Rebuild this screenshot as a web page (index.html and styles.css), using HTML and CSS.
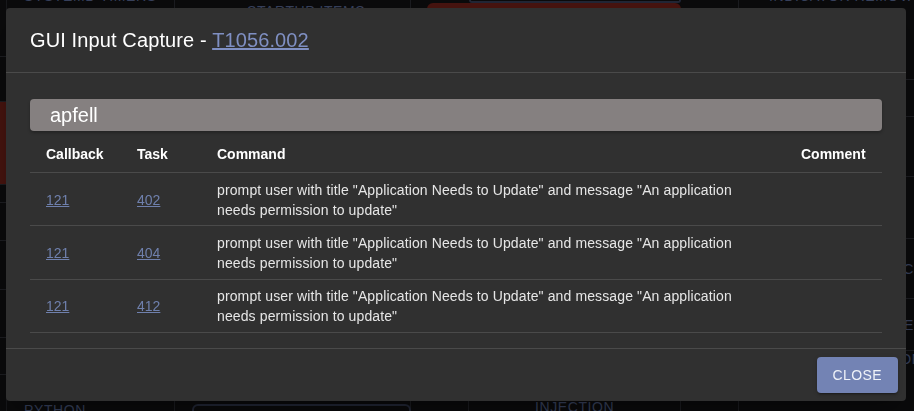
FILE: index.html
```html
<!DOCTYPE html>
<html lang="en">
<head>
<meta charset="utf-8">
<title>GUI Input Capture</title>
<link rel="stylesheet" href="styles.css">
</head>
<body>
<div class="matrix">
  <div class="col c0">
    <div class="cell h57"></div>
    <div class="cell h45"></div>
    <div class="cell red h83"></div>
    <div class="cell h18"></div>
    <div class="cell h38"></div>
    <div class="cell h49"></div>
    <div class="cell h48"></div>
    <div class="cell h37"></div>
  </div>
  <div class="col c1">
    <div class="tech tech-up pad17">SYSTEMD TIMERS</div>
    <div class="fill"></div>
    <div class="tech pad17 tech-low">PYTHON</div>
  </div>
  <div class="col c2">
    <div class="tech tech-mid pad72">STARTUP ITEMS</div>
    <div class="fill"></div>
    <div class="outline-box"></div>
  </div>
  <div class="col c3">
    <div class="split-top">
      <div class="gap58"></div>
      <div class="outline-box-end"></div>
    </div>
    <div class="red-cell"></div>
    <div class="fill"></div>
    <div class="split-bottom">
      <div class="sub-a"></div>
      <div class="sub-b"><span class="tech">INJECTION</span></div>
    </div>
  </div>
  <div class="col c4">
    <div class="tech tech-up pad30">INDICATOR REMOVAL</div>
    <div class="rcell h76"></div>
    <div class="rcell h37"></div>
    <div class="rcell h60"></div>
    <div class="rcell h62"></div>
    <div class="rcell h60 rtext"><span class="tech">PROCESS DISCOVERY C</span></div>
    <div class="rcell h52 rtext"><span class="tech">RESOURCE HIJACKING E</span></div>
    <div class="tech pad34 tech-low">NAME OR LOCATION</div>
  </div>
</div>

<div class="dialog" role="dialog">
  <div class="dialog-title">GUI Input Capture - <a class="title-link" href="#">T1056.002</a></div>
  <div class="dialog-content">
    <div class="group-bar">apfell</div>
    <table class="tasks">
      <colgroup>
        <col class="w-callback">
        <col class="w-task">
        <col class="w-command">
        <col class="w-comment">
      </colgroup>
      <thead>
        <tr><th>Callback</th><th>Task</th><th>Command</th><th>Comment</th></tr>
      </thead>
      <tbody>
        <tr>
          <td><a class="row-link" href="#">121</a></td>
          <td><a class="row-link" href="#">402</a></td>
          <td class="cmd">prompt user with title "Application Needs to Update" and message "An application needs permission to update"</td>
          <td></td>
        </tr>
        <tr>
          <td><a class="row-link" href="#">121</a></td>
          <td><a class="row-link" href="#">404</a></td>
          <td class="cmd">prompt user with title "Application Needs to Update" and message "An application needs permission to update"</td>
          <td></td>
        </tr>
        <tr>
          <td><a class="row-link" href="#">121</a></td>
          <td><a class="row-link" href="#">412</a></td>
          <td class="cmd">prompt user with title "Application Needs to Update" and message "An application needs permission to update"</td>
          <td></td>
        </tr>
      </tbody>
    </table>
  </div>
  <div class="dialog-actions">
    <button class="close-btn" type="button">Close</button>
  </div>
</div>
</body>
</html>
```

FILE: styles.css
```css
* { box-sizing: border-box; }

html, body {
  margin: 0;
  width: 914px;
  height: 411px;
  overflow: hidden;
}

body {
  background: #0b0b0c;
  font-family: "Liberation Sans", Arial, Helvetica, sans-serif;
}

/* ---------- background matrix ---------- */
.matrix {
  display: flex;
  height: 411px;
  overflow: hidden;
}

.col {
  display: flex;
  flex-direction: column;
  height: 411px;
  border-right: 1px solid #1c1d21;
  flex: none;
}

.c0 { width: 7px; border-right: 1px solid #18191c; }
.c1 { width: 168px; }
.c2 { width: 236px; }
.c3 { width: 328px; }
.c4 { width: 175px; border-right: none; }

.fill { flex: 1; }

.cell { border-bottom: 1px solid #1e1f23; flex: none; }
.cell.red { background: #4a1510; }

.h18 { height: 18px; }
.h37 { height: 37px; }
.h38 { height: 38px; }
.h45 { height: 45px; }
.h48 { height: 48px; }
.h49 { height: 49px; }
.h52 { height: 52px; }
.h57 { height: 57px; }
.h60 { height: 60px; }
.h62 { height: 62px; }
.h76 { height: 76px; }
.h83 { height: 83px; }

.tech {
  color: #3a4460;
  font-size: 14px;
  line-height: 16px;
  letter-spacing: 0.6px;
  text-transform: uppercase;
  white-space: nowrap;
  flex: none;
}

.tech-up { margin-top: -12px; }
.tech-mid { margin-top: 3px; }
.tech-low { margin-bottom: -7px; }

.pad17 { padding-left: 17px; }
.pad30 { padding-left: 30px; }
.pad34 { padding-left: 34px; }
.pad72 { padding-left: 72px; }

.outline-box {
  flex: none;
  margin-left: 17px;
  width: 219px;
  height: 10px;
  margin-bottom: -3px;
  border: 2px solid #232838;
  border-bottom: none;
  border-radius: 6px 6px 0 0;
}

.split-top {
  display: flex;
  flex: none;
  height: 3px;
}
.gap58 { width: 58px; }
.outline-box-end {
  width: 212px;
  height: 3px;
  border: 2px solid #232838;
  border-top: none;
  border-radius: 0 0 6px 6px;
}

.red-cell {
  flex: none;
  margin-left: 16px;
  width: 254px;
  height: 40px;
  background: #4a1510;
  border-radius: 6px 6px 0 0;
}

.split-bottom {
  display: flex;
  flex: none;
  height: 16px;
}
.sub-a { width: 58px; border-right: 1px solid #1c1d21; }
.sub-b {
  width: 212px;
  border-right: 1px solid #1c1d21;
  padding-left: 66px;
  padding-top: 3px;
}

.rcell {
  flex: none;
  border-bottom: 1px solid #1e1f23;
}
.rtext {
  display: flex;
  align-items: center;
  justify-content: flex-end;
  overflow: hidden;
}

/* ---------- dialog ---------- */
.dialog {
  position: fixed;
  left: 6px;
  top: 8px;
  width: 900px;
  background: #303030;
  border-radius: 4px;
  color: #ffffff;
  box-shadow: 0 11px 15px -7px rgba(0,0,0,0.2),
              0 24px 38px 3px rgba(0,0,0,0.14),
              0 9px 46px 8px rgba(0,0,0,0.12);
}

.dialog-title {
  padding: 16px 24px;
  font-size: 20px;
  line-height: 32px;
  font-weight: 400;
  letter-spacing: 0.12px;
  color: #ffffff;
}

.title-link {
  color: #7f8fc2;
  text-decoration: underline;
}

.dialog-content {
  border-top: 1px solid #4a4a4a;
  border-bottom: 1px solid #4a4a4a;
  padding: 26px 24px 15px;
}

.group-bar {
  height: 32px;
  background: #858080;
  border-radius: 4px;
  padding-left: 20px;
  font-size: 20px;
  line-height: 33px;
  color: #ffffff;
  box-shadow: 0 2px 3px rgba(0,0,0,0.25);
}

.tasks {
  width: 100%;
  border-collapse: collapse;
  table-layout: fixed;
  font-size: 14px;
}

.w-callback { width: 91px; }
.w-task { width: 80px; }
.w-command { width: 584px; }
.w-comment { width: 97px; }

.tasks th {
  text-align: left;
  font-weight: 700;
  color: #ffffff;
  padding: 15px 16px 9px;
  line-height: 17px;
  border-bottom: 1px solid #4a4a4a;
}

.tasks td {
  padding: 6.7px 16px 5.6px;
  line-height: 20px;
  color: #e6e6e6;
  vertical-align: middle;
  border-bottom: 1px solid #4a4a4a;
}

.tasks td.cmd {
  padding-right: 40px;
  letter-spacing: 0.12px;
}

.row-link {
  color: #6f80ad;
  text-decoration: underline;
}

.dialog-actions {
  display: flex;
  justify-content: flex-end;
  padding: 8px;
}

.close-btn {
  height: 36px;
  padding: 6px 16px;
  border: none;
  border-radius: 4px;
  background: #7383b4;
  color: #eef1f8;
  font-family: "Liberation Sans", Arial, sans-serif;
  font-size: 14px;
  line-height: 24px;
  letter-spacing: 0.4px;
  text-transform: uppercase;
  box-shadow: 0 3px 1px -2px rgba(0,0,0,0.2),
              0 2px 2px 0 rgba(0,0,0,0.14),
              0 1px 5px 0 rgba(0,0,0,0.12);
}
```
